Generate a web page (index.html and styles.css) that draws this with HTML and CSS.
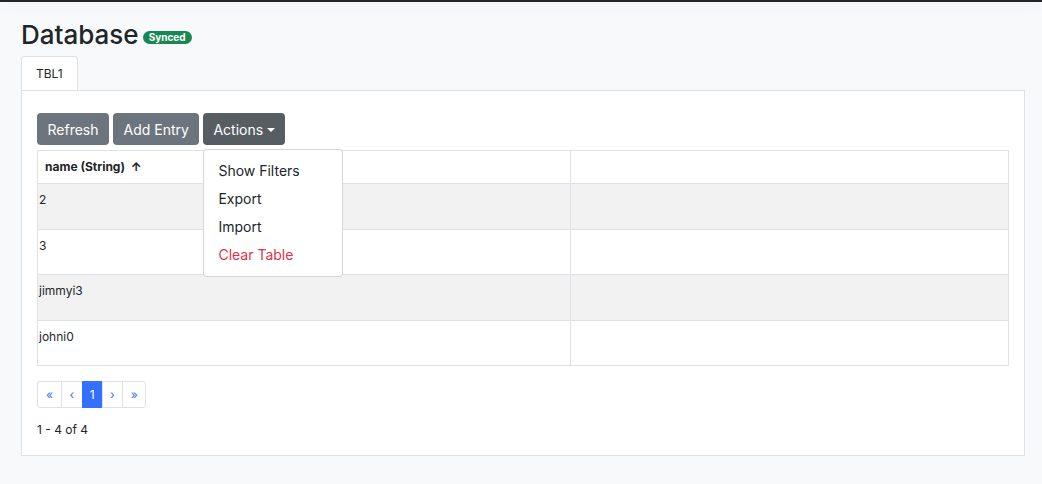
FILE: index.html
```html
<!DOCTYPE html>
<html lang="en">
<head>
  <meta charset="UTF-8" />
  <title>Database</title>
  <link rel="stylesheet" href="styles.css">
</head>
<body>
  <div class="topbar"></div>

  <div class="page">
    <h1 class="title">Database <span class="badge">Synced</span></h1>

    <div class="tabs">
      <div class="tab active">TBL1</div>
    </div>

    <div class="panel">
      <div class="toolbar">
        <button class="btn">Refresh</button>
        <button class="btn">Add Entry</button>
        <div class="dropdown">
          <button class="btn active">Actions <span class="caret"></span></button>
          <ul class="menu">
            <li>Show Filters</li>
            <li>Export</li>
            <li>Import</li>
            <li class="danger">Clear Table</li>
          </ul>
        </div>
      </div>

      <table class="grid">
        <thead>
          <tr>
            <th class="col-name">name (String) <span class="sort">&#8593;</span></th>
            <th></th>
          </tr>
        </thead>
        <tbody>
          <tr><td>2</td><td></td></tr>
          <tr><td>3</td><td></td></tr>
          <tr><td>jimmyi3</td><td></td></tr>
          <tr><td>johni0</td><td></td></tr>
        </tbody>
      </table>

      <ul class="pager">
        <li>&laquo;</li>
        <li>&lsaquo;</li>
        <li class="current">1</li>
        <li>&rsaquo;</li>
        <li>&raquo;</li>
      </ul>

      <p class="count">1 - 4 of 4</p>
    </div>
  </div>
</body>
</html>
```

FILE: styles.css
```css
body {
  margin: 0;
  background: #f8f9fa;
  font-family: Inter, "Noto Sans", sans-serif;
  color: #212529;
}
.topbar {
  height: 2px;
  background: #222428;
  box-shadow: 0 2px 16px rgba(0, 0, 0, 0.13);
}
.page {
  padding: 0 17px 0 21px;
}
.title {
  margin: 16px 0 0 0;
  font-size: 26px;
  font-weight: 500;
  line-height: 34px;
  display: flex;
  align-items: center;
}
.badge {
  display: inline-block;
  margin-left: 4px;
  margin-top: 4px;
  background: #198754;
  color: #fff;
  font-size: 10px;
  font-weight: 700;
  line-height: 13px;
  padding: 0 6px;
  border-radius: 7px;
}
.tabs {
  margin-top: 4px;
  display: flex;
}
.tab {
  font-size: 12px;
  padding: 0 14px;
  height: 33px;
  line-height: 34px;
  background: #fff;
  border: 1px solid #dee2e6;
  border-bottom: none;
  border-radius: 4px 4px 0 0;
}
.panel {
  background: #fff;
  border: 1px solid #dee2e6;
  padding: 22px 15px 0 15px;
  height: 366px;
  box-sizing: border-box;
}
.toolbar {
  display: flex;
  gap: 4px;
  height: 32px;
}
.btn {
  font-family: inherit;
  font-size: 14px;
  color: #fff;
  background: #6c757d;
  border: none;
  border-radius: 4px;
  height: 32px;
  padding: 0 10.5px;
  cursor: pointer;
}
.btn.active {
  background: #565e64;
  padding: 0 10px;
}
.caret {
  display: inline-block;
  vertical-align: 3px;
  margin-left: 0;
  border-top: 4px solid #fff;
  border-left: 4px solid transparent;
  border-right: 4px solid transparent;
}
.dropdown {
  position: relative;
}
.menu {
  position: absolute;
  top: 36px;
  left: 0;
  z-index: 2;
  width: 140px;
  box-sizing: border-box;
  margin: 0;
  padding: 7px 0;
  list-style: none;
  background: #fff;
  border: 1px solid rgba(0, 0, 0, 0.16);
  border-radius: 4px;
}
.menu li {
  font-size: 14px;
  line-height: 28px;
  padding: 0 14px;
}
.menu li.danger {
  color: #dc3545;
}
.grid {
  margin-top: 5px;
  width: 100%;
  border-collapse: collapse;
  font-size: 12px;
}
.grid th,
.grid td {
  border: 1px solid #dee2e6;
  text-align: left;
  vertical-align: top;
}
.grid th {
  height: 32px;
  padding: 0 7px;
  font-weight: 700;
  line-height: 32px;
}
.grid th.col-name {
  width: 518px;
}
.sort {
  margin-left: 3px;
}
.grid td {
  height: 45.5px;
  padding: 8px 1px 0;
  box-sizing: border-box;
  line-height: 15px;
}
.grid tbody tr:nth-child(odd) td {
  background: #f2f2f2;
}
.pager {
  display: flex;
  list-style: none;
  margin: 15px 0 0 0;
  padding: 0;
}
.pager li {
  font-size: 12px;
  color: #3e70f4;
  height: 25px;
  line-height: 25px;
  text-align: center;
  padding: 0 7.5px;
  border: 1px solid #dee2e6;
  margin-left: -1px;
}
.pager li:first-child {
  margin-left: 0;
  padding: 0 8px;
  border-radius: 3px 0 0 3px;
}
.pager li:last-child {
  border-radius: 0 3px 3px 0;
}
.pager li.current {
  background: #3370ff;
  border-color: #3370ff;
  color: #fff;
  padding: 0 7px;
}
.count {
  margin: 14px 0 0 0;
  font-size: 12px;
  line-height: 16px;
}
```
